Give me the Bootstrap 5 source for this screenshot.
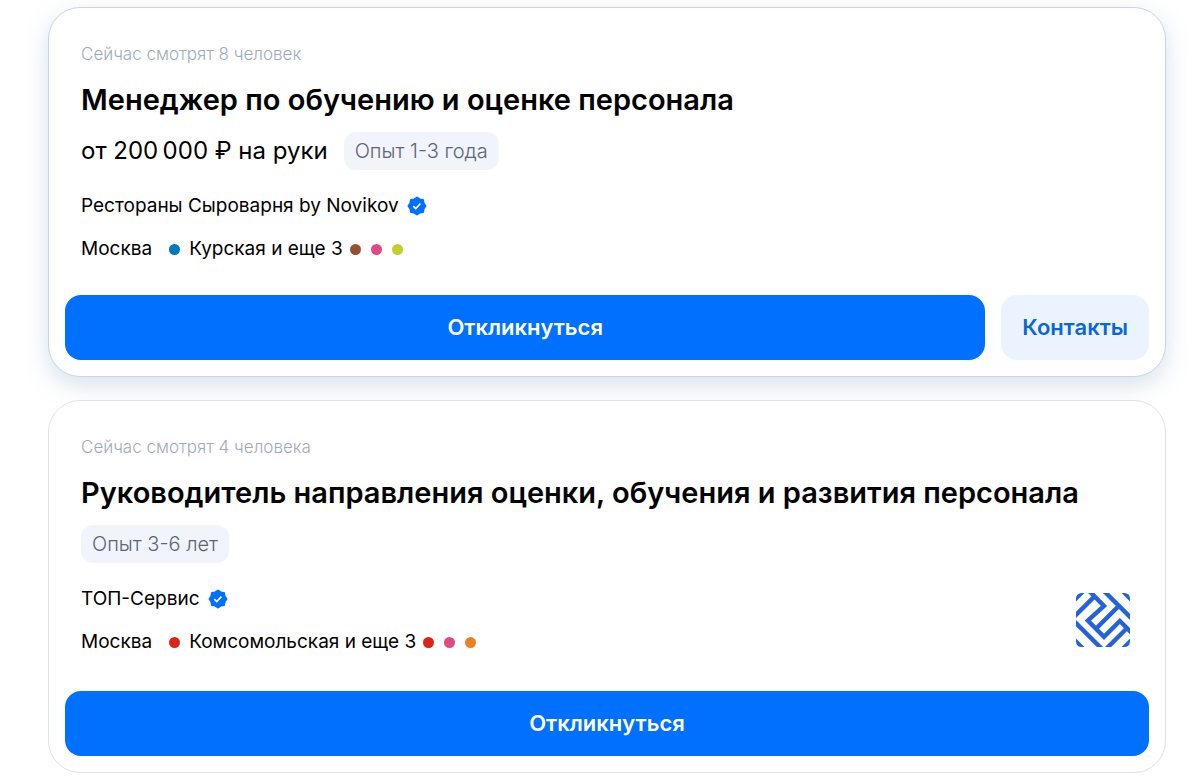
<!DOCTYPE html>
<html lang="ru">
<head>
<meta charset="utf-8">
<meta name="viewport" content="width=device-width, initial-scale=1">
<title>Вакансии</title>
<link href="https://cdn.jsdelivr.net/npm/bootstrap@5.3.0/dist/css/bootstrap.min.css" rel="stylesheet">
<style>
body{font-family:Inter,"Noto Sans",sans-serif;color:#000;background:#fff}
.vacancies{padding:7px 34px 10px 48px;gap:23px}
.vacancy{border:1px solid #dfe3e8;border-radius:32px;padding:32px 16px 16px;background:#fff}
.vacancy-raised{border-color:#ccd5df;box-shadow:0 8px 24px rgba(112,146,189,.28)}
.vacancy-info{padding:0 16px}
.viewers{font-size:17px;line-height:28px;color:#9dacbc;font-weight:300}
.vacancy-title{font-size:29px;line-height:40px;font-weight:600;margin:12px 0}
.vacancy-title a{color:#000;text-decoration:none}
.pay{font-size:24px;line-height:38px;font-weight:400}
.exp{font-size:20px;line-height:30px;padding:4px 11px;border-radius:12px;background:#f1f4fb;color:#5c6573;font-weight:300}
.meta{font-size:19px;line-height:28px;font-weight:400}
.meta a{color:#000;text-decoration:none}
.facts{gap:15px;margin-top:22px}
.metro{width:11px;height:11px;border-radius:50%}
.metro-first{margin:0 9px 0 17px}
.lines{gap:10px;margin-left:7px}
.company-logo{margin:30px 3px 12px}
.action{font-size:22px;line-height:33px;font-weight:600;padding:16px 21px;border-radius:16px;border:0}
.action-main{background:#0070ff;color:#fff}
.action-soft{background:#ebf4fe;color:#0b67d9}
.actions{margin-top:32px}
</style>
</head>
<body>
<svg width="0" height="0" class="position-absolute" aria-hidden="true">
<symbol id="verified" viewBox="0 0 20 20"><path fill="#0070ff" stroke="#0070ff" stroke-width="2" stroke-linejoin="round" d="M10 1.5 12.7 3.4 16 4 16.6 7.3 18.5 10 16.6 12.7 16 16 12.7 16.6 10 18.5 7.3 16.6 4 16 3.4 12.7 1.5 10 3.4 7.3 4 4 7.3 3.4Z"/><path fill="none" stroke="#fff" stroke-width="1.7" d="m6.3 10.2 2.4 2.3 4.7-4.8"/></symbol>
</svg>
<main class="vacancies d-flex flex-column">
<article class="vacancy vacancy-raised">
  <div class="vacancy-info">
    <div class="viewers">Сейчас смотрят 8 человек</div>
    <h2 class="vacancy-title"><a href="#">Менеджер по обучению и оценке персонала</a></h2>
    <div class="d-flex align-items-center gap-3"><span class="pay">от 200&#8239;000 ₽ на руки</span><span class="exp">Опыт 1-3 года</span></div>
    <div class="facts meta d-flex flex-column">
      <div class="d-flex align-items-center gap-2"><a href="#">Рестораны Сыроварня by Novikov</a><svg width="20" height="20" role="img" aria-label="Проверено"><use href="#verified"/></svg></div>
      <div class="d-flex align-items-center"><span>Москва</span><i class="metro metro-first" style="background:#0078be"></i><span>Курская и еще 3</span><span class="lines d-flex"><i class="metro" style="background:#915133"></i><i class="metro" style="background:#de4a83"></i><i class="metro" style="background:#bed12c"></i></span></div>
    </div>
  </div>
  <div class="actions d-flex gap-3"><button type="button" class="btn action action-main flex-grow-1">Откликнуться</button><button type="button" class="btn action action-soft">Контакты</button></div>
</article>
<article class="vacancy">
  <div class="vacancy-info">
    <div class="viewers">Сейчас смотрят 4 человека</div>
    <h2 class="vacancy-title"><a href="#">Руководитель направления оценки, обучения и развития персонала</a></h2>
    <div class="d-flex"><span class="exp">Опыт 3-6 лет</span></div>
    <div class="d-flex justify-content-between align-items-start">
    <div class="facts meta d-flex flex-column">
      <div class="d-flex align-items-center gap-2"><a href="#">ТОП-Сервис</a><svg width="20" height="20" role="img" aria-label="Проверено"><use href="#verified"/></svg></div>
      <div class="d-flex align-items-center"><span>Москва</span><i class="metro metro-first" style="background:#dc2418"></i><span>Комсомольская и еще 3</span><span class="lines d-flex"><i class="metro" style="background:#dc2418"></i><i class="metro" style="background:#de4a83"></i><i class="metro" style="background:#ee7f22"></i></span></div>
    </div>
    <svg class="company-logo" width="54" height="54" viewBox="0 0 160 160" role="img" aria-label="ТОП-Сервис"><defs><clipPath id="logo-clip"><rect width="160" height="160" rx="16"/></clipPath></defs><g clip-path="url(#logo-clip)"><path fill="#2462dc" d="M0 0H25L0 25ZM160 0V25L135 0ZM0 160V135L25 160ZM160 160H135L160 135Z"/><path fill="none" stroke="#2462dc" stroke-width="13" d="M-5 70 52 13M40-5 83 38 35 82 83 130 130 83 165 118M59 106 127 38M84-5 165 76M-5 84 76 165M90 165 147 108"/></g></svg>
    </div>
  </div>
  <div class="actions d-flex"><button type="button" class="btn action action-main flex-grow-1">Откликнуться</button></div>
</article>
</main>
<script src="https://cdn.jsdelivr.net/npm/bootstrap@5.3.0/dist/js/bootstrap.bundle.min.js"></script>
</body>
</html>
